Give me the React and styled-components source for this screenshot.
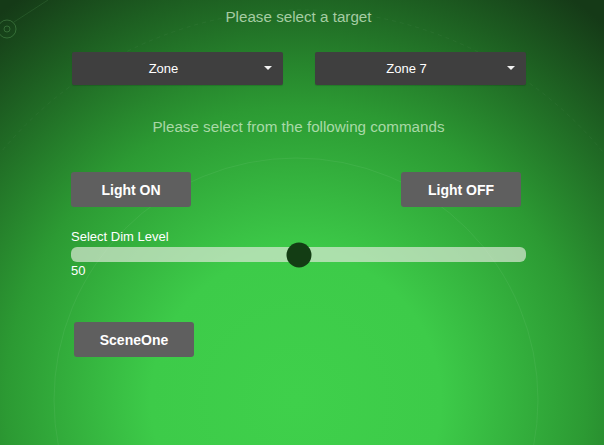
import React, { useState } from "react";
import styled, { createGlobalStyle } from "styled-components";

const GlobalStyle = createGlobalStyle`
  html, body {
    margin: 0;
    padding: 0;
  }
  body {
    font-family: "Liberation Sans", Arial, sans-serif;
  }
`;

const Page = styled.div`
  position: relative;
  width: 604px;
  height: 445px;
  overflow: hidden;
  background: radial-gradient(
    ellipse 80% 110% at 49% 90%,
    #3fd04b 0%,
    #3dcb49 30%,
    #2c9a33 60%,
    #1d5e21 85%,
    #153a17 100%
  );
`;

const Decor = styled.svg`
  position: absolute;
  inset: 0;
  pointer-events: none;
`;

const Content = styled.div`
  position: relative;
  width: 455px;
  margin-left: 71px;
  display: flex;
  flex-direction: column;
`;

const Heading = styled.div`
  text-align: center;
  color: rgba(220, 242, 214, 0.72);
  font-size: 15.2px;
  line-height: 18px;
  padding-top: ${(p) => p.$top}px;
`;

const SelectRow = styled.div`
  display: flex;
  justify-content: space-between;
  padding-left: 1px;
  margin-top: 26px;
`;

const Select = styled.div`
  position: relative;
  width: 211px;
  height: 33px;
  box-sizing: border-box;
  padding-right: 28px;
  background: #3f3f3f;
  border-radius: 2px;
  display: flex;
  align-items: center;
  justify-content: center;
  color: #fff;
  font-size: 13px;
  box-shadow: 0 1px 1px rgba(0, 0, 0, 0.15);
`;

const Caret = styled.span`
  position: absolute;
  right: 11px;
  top: 14px;
  width: 0;
  height: 0;
  border-left: 4px solid transparent;
  border-right: 4px solid transparent;
  border-top: 4px solid #f2f2f2;
`;

const ButtonRow = styled.div`
  display: flex;
  justify-content: space-between;
  padding-right: 5px;
  margin-top: ${(p) => p.$top}px;
  padding-left: ${(p) => p.$left || 0}px;
`;

const Button = styled.button`
  width: 120px;
  height: 35px;
  border: none;
  border-radius: 3px;
  background: #5f5f5f;
  color: #fff;
  font-family: "Liberation Sans", Arial, sans-serif;
  font-weight: bold;
  font-size: 14px;
  cursor: pointer;
`;

const SliderBlock = styled.div`
  margin-top: 22px;
  color: #fff;
  font-size: 13px;
`;

const Label = styled.div`
  line-height: 16px;
`;

const Track = styled.div`
  position: relative;
  height: 15px;
  margin-top: 2px;
  border-radius: 6px;
  background: rgba(225, 235, 220, 0.68);
`;

const Thumb = styled.div`
  position: absolute;
  top: 50%;
  width: 25px;
  height: 25px;
  border-radius: 50%;
  background: #133d14;
  transform: translate(-50%, -50%);
`;

const Value = styled.div`
  line-height: 16px;
  margin-top: 1px;
`;

export default function App() {
  const [level] = useState(50);
  return (
    <Page>
      <GlobalStyle />
      <Decor width="604" height="445" viewBox="0 0 604 445">
        <circle cx="296" cy="400" r="242" fill="none" stroke="rgba(255,255,255,0.06)" strokeWidth="1" />
        <circle cx="302" cy="400" r="390" fill="none" stroke="rgba(255,255,255,0.04)" strokeWidth="1" strokeDasharray="4 4" />
        <circle cx="7" cy="29" r="9" fill="none" stroke="rgba(120,200,120,0.3)" strokeWidth="1" />
        <circle cx="7" cy="29" r="3" fill="none" stroke="rgba(120,200,120,0.3)" strokeWidth="1" />
        <line x1="14" y1="22" x2="48" y2="0" stroke="rgba(120,200,120,0.15)" strokeWidth="1" />
      </Decor>
      <Content>
        <Heading $top={8}>Please select a target</Heading>
        <SelectRow>
          <Select>
            Zone
            <Caret />
          </Select>
          <Select>
            Zone 7
            <Caret />
          </Select>
        </SelectRow>
        <Heading $top={33}>Please select from the following commands</Heading>
        <ButtonRow $top={36}>
          <Button>Light ON</Button>
          <Button>Light OFF</Button>
        </ButtonRow>
        <SliderBlock>
          <Label>Select Dim Level</Label>
          <Track>
            <Thumb style={{ left: `${level}%` }} />
          </Track>
          <Value>{level}</Value>
        </SliderBlock>
        <ButtonRow $top={43} $left={3}>
          <Button>SceneOne</Button>
        </ButtonRow>
      </Content>
    </Page>
  );
}
